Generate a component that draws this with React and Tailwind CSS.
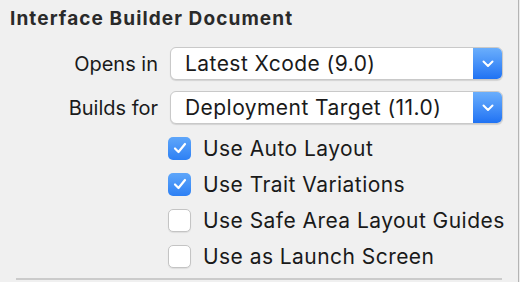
import React from 'react';

const font = { fontFamily: 'Inter, "Liberation Sans", sans-serif' };

const Chevron = () => (
    <svg width="12" height="8" viewBox="0 0 12 8" fill="none">
        <path d="M1.5 1.5 L6 6 L10.5 1.5" stroke="white" strokeWidth="2" strokeLinecap="round" strokeLinejoin="round" />
    </svg>
);

const Check = () => (
    <svg width="14" height="12" viewBox="0 0 14 12" fill="none">
        <path d="M2 6.5 L5.5 10 L12 2" stroke="white" strokeWidth="2.2" strokeLinecap="round" strokeLinejoin="round" />
    </svg>
);

const Select = ({ value }) => (
    <div className="flex h-[33px] w-[333px] rounded-[6px] bg-white border border-[#c9c9c9] shadow-[0_1px_1px_rgba(0,0,0,0.12)] overflow-hidden">
        <div className="flex-1 flex items-center pl-[14px] text-[21px] tracking-[0.45px] text-[#1a1a1a] leading-none">{value}</div>
        <div className="w-[29px] flex items-center justify-center bg-gradient-to-b from-[#6aaefc] to-[#1f72f3]">
            <Chevron />
        </div>
    </div>
);

const CheckRow = ({ label, checked }) => (
    <div className="flex items-center h-[36px]">
        {checked ? (
            <div className="w-[23px] h-[23px] rounded-[5px] bg-gradient-to-b from-[#5ea6fa] to-[#2d80f4] flex items-center justify-center">
                <Check />
            </div>
        ) : (
            <div className="w-[23px] h-[23px] rounded-[5px] bg-white border border-[#c4c4c4] shadow-[0_1px_1px_rgba(0,0,0,0.08)]" />
        )}
        <span className="ml-[12px] text-[21px] tracking-[0.45px] text-[#1a1a1a] leading-none">{label}</span>
    </div>
);

export default function App() {
    return (
        <div className="w-[520px] h-[282px] bg-[#f0f0f0] flex overflow-hidden" style={font}>
            <div className="w-[518px] flex flex-col">
                <h1 className="pl-[10px] pt-[8px] text-[19px] tracking-[1.1px] font-bold text-[#2a2a2a] leading-[22px]">Interface Builder Document</h1>

                <div className="mt-[17px] flex flex-col gap-[11px]">
                    <div className="flex items-center">
                        <span className="w-[158px] text-right text-[20px] text-[#1a1a1a] leading-none">Opens in</span>
                        <div className="ml-[12px]"><Select value="Latest Xcode (9.0)" /></div>
                    </div>
                    <div className="flex items-center">
                        <span className="w-[158px] text-right text-[20px] text-[#1a1a1a] leading-none">Builds for</span>
                        <div className="ml-[12px]"><Select value="Deployment Target (11.0)" /></div>
                    </div>
                </div>

                <div className="mt-[6px] pl-[168px] flex flex-col">
                    <CheckRow label="Use Auto Layout" checked />
                    <CheckRow label="Use Trait Variations" checked />
                    <CheckRow label="Use Safe Area Layout Guides" />
                    <CheckRow label="Use as Launch Screen" />
                </div>

                <div className="mt-auto mb-[2px] ml-[16px] w-[486px] h-[2px] bg-[#cbcbcb]" />
            </div>
            <div className="w-[1px] h-full bg-[#b4b4b4]" />
            <div className="w-[1px] h-full bg-[#ececec]" />
        </div>
    );
}
